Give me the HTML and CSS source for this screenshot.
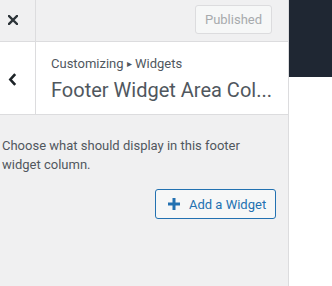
FILE: index.html
```html
<!DOCTYPE html>
<html>
<head>
<meta charset="utf-8">
<link rel="stylesheet" href="styles.css">
</head>
<body>
<div class="app">
  <div class="panel">
    <div class="topbar">
      <div class="close">
        <svg width="10" height="10" viewBox="0 0 10 10"><path d="M1 1L9 9M9 1L1 9" stroke="#2c3338" stroke-width="2.4" stroke-linecap="square"/></svg>
      </div>
      <div class="topfill">
        <div class="published">Published</div>
      </div>
    </div>
    <div class="sechead">
      <div class="back">
        <svg width="8" height="12" viewBox="0 0 8 12"><path d="M6.5 1L2 6L6.5 11" fill="none" stroke="#1d2327" stroke-width="2.4"/></svg>
      </div>
      <div class="titles">
        <div class="crumb">Customizing <span class="tri">▸</span> Widgets</div>
        <div class="title">Footer Widget Area Col...</div>
      </div>
    </div>
    <div class="body">
      <p class="desc">Choose what should display in this footer widget column.</p>
      <div class="actions">
        <div class="addbtn">
          <svg width="12" height="12" viewBox="0 0 12 12"><path d="M6 0V12M0 6H12" stroke="#2271b1" stroke-width="3"/></svg>
          <span>Add a Widget</span>
        </div>
      </div>
    </div>
  </div>
  <div class="preview">
    <div class="darkbar"></div>
  </div>
</div>
</body>
</html>
```
FILE: styles.css
```css
html, body {
  margin: 0;
  padding: 0;
  height: 100%;
}
body {
  font-family: Roboto, "Liberation Sans", sans-serif;
  background: #fff;
}
.app {
  display: flex;
  height: 286px;
}
.panel {
  width: 288px;
  border-right: 1px solid #dcdcde;
  background: #f0f0f1;
  display: flex;
  flex-direction: column;
}
.topbar {
  height: 41px;
  border-bottom: 1px solid #dcdcde;
  display: flex;
}
.close {
  width: 36px;
  border-right: 1px solid #dcdcde;
  display: flex;
  align-items: center;
  padding-left: 8px;
  box-sizing: border-box;
  padding-bottom: 2px;
}
.topfill {
  flex: 1;
  display: flex;
  justify-content: flex-end;
  align-items: flex-start;
  padding: 5px 16px 0 0;
}
.published {
  width: 77px;
  height: 29px;
  box-sizing: border-box;
  border: 1px solid #dcdcde;
  border-radius: 3px;
  background: #f6f7f7;
  color: #a7aaad;
  font-size: 13px;
  display: flex;
  align-items: center;
  justify-content: center;
}
.sechead {
  height: 72px;
  background: #fff;
  border-bottom: 1px solid #dcdcde;
  display: flex;
}
.back {
  width: 36px;
  border-right: 1px solid #dcdcde;
  display: flex;
  align-items: center;
  padding-left: 8px;
  box-sizing: border-box;
  padding-top: 3px;
}
.back svg {
  width: 9px;
  height: 13px;
}
.titles {
  padding-left: 15px;
  padding-top: 12px;
}
.crumb {
  font-size: 13px;
  color: #50575e;
  line-height: 20px;
}
.tri {
  font-size: 10px;
  position: relative;
  top: -1px;
}
.title {
  font-size: 20px;
  color: #50575e;
  line-height: 28px;
  margin-top: 1px;
  white-space: nowrap;
}
.body {
  flex: 1;
  padding: 0 12px 0 2px;
}
.desc {
  margin: 21px 0 0;
  font-size: 13px;
  line-height: 19px;
  color: #50575e;
  padding-right: 10px;
}
.actions {
  display: flex;
  justify-content: flex-end;
  margin-top: 15px;
}
.addbtn {
  width: 121px;
  height: 30px;
  box-sizing: border-box;
  border: 1px solid #2271b1;
  border-radius: 3px;
  background: #f6f7f7;
  color: #2271b1;
  font-size: 13px;
  display: flex;
  align-items: center;
  gap: 9px;
  padding-left: 12px;
}
.preview {
  flex: 1;
}
.darkbar {
  height: 77px;
  background: #1f2733;
}
```
